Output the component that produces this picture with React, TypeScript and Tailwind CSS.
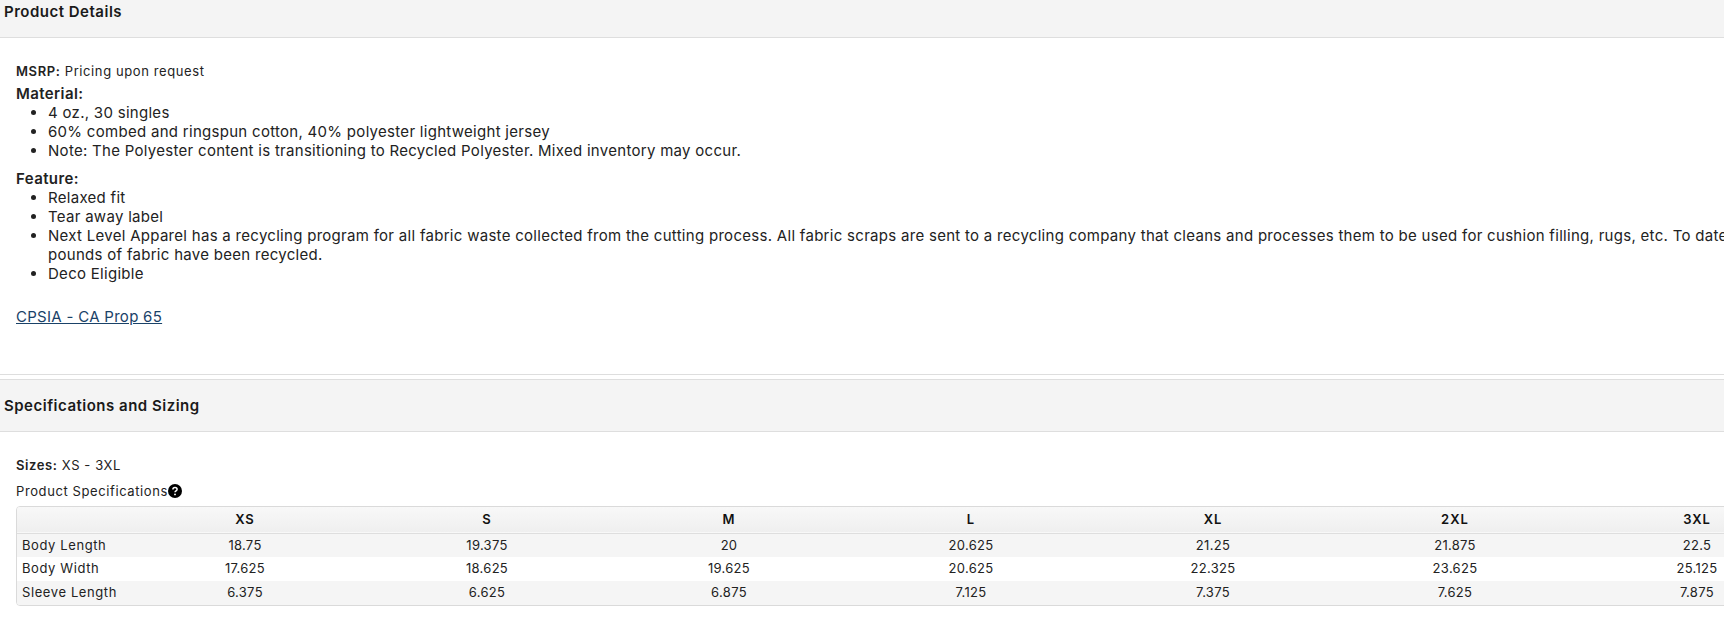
import React from 'react';

const sizes = ['XS', 'S', 'M', 'L', 'XL', '2XL', '3XL'];

const specs = [
  { name: 'Body Length', values: ['18.75', '19.375', '20', '20.625', '21.25', '21.875', '22.5'] },
  { name: 'Body Width', values: ['17.625', '18.625', '19.625', '20.625', '22.325', '23.625', '25.125'] },
  { name: 'Sleeve Length', values: ['6.375', '6.625', '6.875', '7.125', '7.375', '7.625', '7.875'] },
];

const HelpIcon = () => (
  <svg width="14" height="14" viewBox="0 0 14 14" className="shrink-0">
    <circle cx="7" cy="7" r="7" fill="#000" />
    <path d="M4.9 5.4c0-1.2 1-1.9 2.1-1.9s2.1.7 2.1 1.8c0 1.6-2.1 1.5-2.1 3" fill="none" stroke="#fff" strokeWidth="1.5" />
    <circle cx="7" cy="10.4" r="0.95" fill="#fff" />
  </svg>
);

const SectionHeader = ({ title, className }: { title: string; className: string }) => (
  <div className={`bg-[#f4f4f4] border-b border-[#dedede] pl-[4px] font-semibold text-[15px] tracking-[0.5px] text-[#1a1a1a] ${className}`}>
    {title}
  </div>
);

const App: React.FC = () => {
  return (
    <div className="w-[1724px] h-[620px] overflow-hidden bg-white text-[#222] font-['Inter',sans-serif]">
      <SectionHeader title="Product Details" className="h-[38px] leading-[24px]" />

      <div className="h-[337px] pl-[16px] pt-[24px] border-b border-[#dedede]">
        <p className="text-[13px] leading-[19px] h-[22px] tracking-[0.6px]">
          <span className="font-semibold">MSRP:</span> Pricing upon request
        </p>
        <p className="text-[15px] leading-[19px] font-semibold tracking-[0.4px]">Material:</p>
        <ul className="list-disc pl-[32px] text-[15px] leading-[19px] mb-[9px] tracking-[0.29px]">
          <li>4 oz., 30 singles</li>
          <li>60% combed and ringspun cotton, 40% polyester lightweight jersey</li>
          <li>Note: The Polyester content is transitioning to Recycled Polyester. Mixed inventory may occur.</li>
        </ul>
        <p className="text-[15px] leading-[19px] font-semibold tracking-[0.4px]">Feature:</p>
        <ul className="list-disc pl-[32px] text-[15px] leading-[19px] whitespace-nowrap tracking-[0.29px]">
          <li>Relaxed fit</li>
          <li>Tear away label</li>
          <li>
            Next Level Apparel has a recycling program for all fabric waste collected from the cutting process. All fabric scraps are sent to a recycling company that cleans and processes them to be used for cushion filling, rugs, etc. To date
            <br />
            pounds of fabric have been recycled.
          </li>
          <li>Deco Eligible</li>
        </ul>
        <p className="mt-[24px] text-[15px] leading-[19px] tracking-[0.29px]">
          <a href="#" className="text-[#1a4268] underline">CPSIA - CA Prop 65</a>
        </p>
      </div>

      <div className="h-[4px]" />
      <SectionHeader title="Specifications and Sizing" className="h-[53px] leading-[52px] border-t" />

      <div className="pl-[16px] pt-[24px]">
        <p className="text-[13px] leading-[19px] h-[25px] tracking-[0.6px]">
          <span className="font-semibold">Sizes:</span> XS - 3XL
        </p>
        <div className="flex items-center text-[13px] leading-[19px] h-[20px] tracking-[0.6px]">
          Product Specifications
          <HelpIcon />
        </div>
        <div className="w-[1803px] mt-[5px] border border-[#dadada] rounded-[4px] overflow-hidden">
          <table className="w-full table-fixed border-collapse text-[13px] tracking-[0.3px]">
            <colgroup>
              <col className="w-[107px]" />
              {sizes.map((s) => (
                <col key={s} />
              ))}
            </colgroup>
            <thead>
              <tr className="h-[26px] bg-gradient-to-b from-[#f8f8f8] to-[#efefef] border-b border-[#dedede]">
                <th />
                {sizes.map((s) => (
                  <th key={s} className="font-semibold text-center tracking-[1px] text-[#111]">
                    {s}
                  </th>
                ))}
              </tr>
            </thead>
            <tbody>
              {specs.map((row) => (
                <tr key={row.name} className="h-[24px] odd:bg-[#f5f5f5] even:bg-white">
                  <td className="pl-[5px] whitespace-nowrap tracking-[0.6px]">{row.name}</td>
                  {row.values.map((v, i) => (
                    <td key={i} className="text-center">
                      {v}
                    </td>
                  ))}
                </tr>
              ))}
            </tbody>
          </table>
        </div>
      </div>
    </div>
  );
};

export default App;
